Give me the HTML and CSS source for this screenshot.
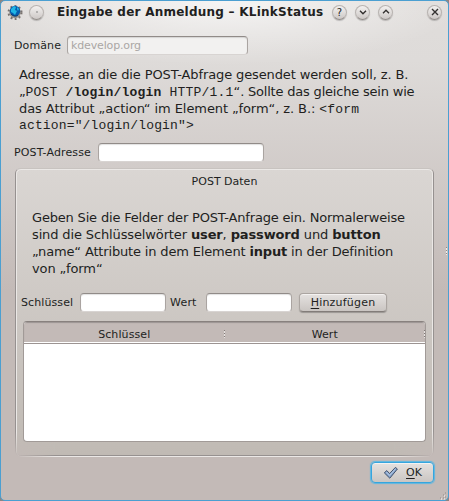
FILE: index.html
```html
<!DOCTYPE html>
<html lang="de">
<head>
<meta charset="utf-8">
<title>Eingabe der Anmeldung – KLinkStatus</title>
<link rel="stylesheet" href="styles.css">
</head>
<body>
<main class="window">
  <header class="titlebar">
    <svg class="app-icon" width="16" height="16" viewBox="0 0 16 16">
      <circle cx="8" cy="8.5" r="6.2" fill="none" stroke="#77716e" stroke-width="2.6" stroke-dasharray="1.8 2.2"/>
      <circle cx="8" cy="8.5" r="5.8" fill="#96918e"/>
      <circle cx="8" cy="7" r="5.2" fill="#075cad"/>
      <path d="M4 5l3-3 2 1-1 3 2 1-2 4-2-2-2-1zM10 3l2 2-1 2-1-2z" fill="#20b6e5"/>
      <path d="M4 10c2 2 5 3 7 1" fill="none" stroke="#073a68"/>
    </svg>
    <span class="round pin"><svg width="14" height="14" viewBox="0 0 14 14"><circle cx="7" cy="7" r=".8" fill="#777"/></svg></span>
    <h1>Eingabe der Anmeldung – KLinkStatus</h1>
    <span class="round help">?</span>
    <span class="round"><svg width="14" height="14" viewBox="0 0 14 14"><path d="M4 5.8l3 3 3-3"/></svg></span>
    <span class="round"><svg width="14" height="14" viewBox="0 0 14 14"><path d="M4 8.2l3-3 3 3"/></svg></span>
    <span class="round close"><svg width="14" height="14" viewBox="0 0 14 14"><path d="M4 4l6 6M10 4l-6 6"/></svg></span>
  </header>
  <div class="row domain"><label>Domäne</label><div class="field disabled">kdevelop.org</div></div>
  <div class="prose intro">
    <div class="line a1">Adresse, an die die POST-Abfrage gesendet werden soll, z. B.</div>
    <div class="line a2">„<code>POST <b>/login/login</b> HTTP/1.1</code>“. Sollte das gleiche sein wie</div>
    <div class="line a3">das Attribut „action“ im Element „form“, z. B.: <code>&lt;form</code></div>
    <div class="line a4"><code>action="/login/login"&gt;</code></div>
  </div>
  <div class="row address"><label>POST-Adresse</label><div class="field"></div></div>
  <section class="group">
    <h2>POST Daten</h2>
    <div class="prose hint">
      <div class="line b1">Geben Sie die Felder der POST-Anfrage ein. Normalerweise</div>
      <div class="line b2">sind die Schlüsselwörter <b>user</b>, <b>password</b> und <b>button</b></div>
      <div class="line b3">„name“ Attribute in dem Element <b>input</b> in der Definition</div>
      <div class="line b4">von „form“</div>
    </div>
    <div class="row entry">
      <label class="key">Schlüssel</label><div class="field"></div>
      <label class="value">Wert</label><div class="field"></div>
      <button class="button add"><span><u>H</u>inzufügen</span></button>
    </div>
    <div class="table">
      <div class="thead"><span>Schlüssel</span><span>Wert</span></div>
    </div>
  </section>
  <footer>
    <button class="button ok"><svg width="16" height="14" viewBox="0 0 16 14"><path d="M1.3 6.8l2.5-2.2 2.8 3 5.8-6.2 2 1.6-7.6 9.2z" fill="#88a6ce" stroke="#41516b"/><path d="M3.5 6l3 3.4 6-6.6" fill="none" stroke="#b9cce5"/></svg><span><u>O</u>K</span></button>
  </footer>
  <i class="side-grip"></i>
  <svg class="corner-grip" width="8" height="8" viewBox="0 0 8 8"><path d="M1 6h1M4 6h1M4 3h1M6 1h1M6 5h1" stroke="#918a87"/><path d="M2 7h1M5 7h1M5 4h1" stroke="#fff"/></svg>
</main>
</body>
</html>
```
FILE: styles.css
```css
* { box-sizing: border-box; }
body { margin: 0; background: #8b8583; font: 11px "DejaVu Sans", sans-serif; color: #221f1e; }
.window {
  position: relative;
  width: 449px;
  height: 501px;
  border: 1px solid #4b9fd1;
  border-radius: 5px;
  overflow: hidden;
  background: radial-gradient(ellipse 240px 64px at 50% 0, rgba(255,255,255,.7), rgba(255,255,255,0)), linear-gradient(#e0dddb 0, #dedbd9 60px, #c3bab7 290px, #c3bab7 100%);
}
.titlebar { display: flex; align-items: center; height: 22px; padding-left: 6px; }
.app-icon { flex: none; margin-right: 6px; }
.round {
  display: flex;
  flex: none;
  width: 15px;
  height: 15px;
  margin-right: 8px;
  align-items: center;
  justify-content: center;
  border: 1px solid #b8b3b0;
  border-bottom-color: #928d8a;
  border-radius: 50%;
  background: linear-gradient(#f3f1f0, #cdc8c6);
  box-shadow: 0 1px 1px rgba(0,0,0,.2);
  font-size: 10px;
}
.round svg { flex: none; fill: none; stroke: #343130; stroke-width: 1.4; }
.pin svg { stroke: none; }
.pin { margin-right: 13px; }
.close { margin: 0 0 0 26px; }
h1 { flex: none; width: 275px; margin: 0; font: bold 12px/20px "DejaVu Sans", sans-serif; letter-spacing: .24px; white-space: nowrap; }
.row { display: flex; align-items: center; height: 20px; }
.row label { flex: none; white-space: nowrap; }
.field {
  flex: none;
  height: 19px;
  border: 1px solid #aaa4a1;
  border-top-color: #918b88;
  border-bottom-color: #d8d4d2;
  border-radius: 4px;
  background: #fff;
  box-shadow: inset 0 1px 1px rgba(0,0,0,.12);
}
.domain { margin: 12px 0 0 13px; }
.domain label { width: 53px; letter-spacing: .1px; }
.domain .field { width: 181px; padding-left: 3px; line-height: 18px; }
.disabled { background: #f2f1f0; color: #aaa7a5; letter-spacing: -.15px; }
.prose { font-size: 13px; line-height: 17px; }
.line { height: 17px; white-space: nowrap; }
.prose code { font: 13px/16px "Liberation Mono", monospace; letter-spacing: .15px; }
.a1 { letter-spacing: -.12px; }
.a2 { letter-spacing: -.2px; }
.a3 { letter-spacing: -.08px; }
.a2 code { letter-spacing: .2px; }
.a4 { margin-top: -1px; }
.b1 { letter-spacing: -.18px; }
.b2 { letter-spacing: -.13px; }
.b3 { letter-spacing: -.16px; }
.b4 { letter-spacing: -.1px; }
.intro { margin: 11px 0 0 18px; }
.address { margin: 9px 0 0 13px; }
.address label { width: 84px; letter-spacing: .14px; }
.address .field { width: 166px; }
.group {
  position: relative;
  z-index: 0;
  width: 419px;
  height: 289px;
  margin: 6px 0 0 14px;
  padding: 0 8px;
}
.group::before, .group::after {
  content: "";
  position: absolute;
  z-index: -1;
  border-radius: 5px;
  -webkit-mask: linear-gradient(#000 0 0) top / 100% 264px no-repeat, linear-gradient(90deg, transparent, #000 40px, #000 calc(100% - 40px), transparent) bottom / 100% 25px no-repeat, linear-gradient(#000, transparent) bottom / 100% 25px no-repeat;
}
.group::before {
  inset: 0 0 1px 0;
  border: 1px solid #969190;
  border-top-color: #c8c3c0;
  background: linear-gradient(#dad6d3, #c0bab4);
}
.group::after { inset: 1px 1px 0 1px; border: 1px solid #ebe8e6; }
h2 { margin: 0; padding-top: 7px; text-align: center; font: 11px/13px "DejaVu Sans", sans-serif; }
.hint { margin: 21px 0 0 9px; }
.entry { margin-top: 15px; }
.entry .field { width: 86px; }
.entry .key { width: 59px; margin-left: -2px; letter-spacing: .1px; }
.entry .value { width: 36px; margin-left: 4px; letter-spacing: .2px; }
.button {
  display: flex;
  align-items: center;
  justify-content: center;
  padding: 0;
  border: 1px solid #aba5a1;
  border-bottom-color: #827c79;
  border-radius: 4px;
  background: linear-gradient(#e5e2e0, #cac5c2);
  box-shadow: 0 1px 1px rgba(0,0,0,.25), inset 0 1px #f4f2f1;
  color: inherit;
  font: 11px/13px "DejaVu Sans", sans-serif;
}
.button u { text-underline-offset: 2px; }
.add { width: 88px; height: 19px; margin-left: 7px; letter-spacing: .2px; }
.table { width: 403px; height: 121px; margin-top: 9px; border: 1px solid #a19a97; border-top-color: #88817e; border-radius: 4px; background: #fff; overflow: hidden; }
.thead { display: flex; height: 22px; border-bottom: 1px solid #9c9492; background: #c3bab7; box-shadow: inset 0 1px 1px rgba(0,0,0,.2), inset 0 -1px #fff; }
.thead span { position: relative; flex: 1; text-align: center; line-height: 25px; letter-spacing: .1px; }
.thead span::after { content: ""; position: absolute; right: 0; top: 8px; width: 1px; height: 8px; background: repeating-linear-gradient(#827a77 0 1px, #e8e4e2 1px 3px); }
footer { display: flex; justify-content: flex-end; padding: 5px 14px 0 0; }
.ok { width: 63px; height: 21px; border-color: #35a5de; box-shadow: 0 0 1px 1px #5db7e2, inset 0 1px #f4f2f1; gap: 7px; }
.side-grip { position: absolute; right: 1px; top: 246px; width: 1px; height: 8px; background: repeating-linear-gradient(#918a87 0 1px, #eee 1px 3px); }
.corner-grip { position: absolute; right: 1px; bottom: 0; }
```
